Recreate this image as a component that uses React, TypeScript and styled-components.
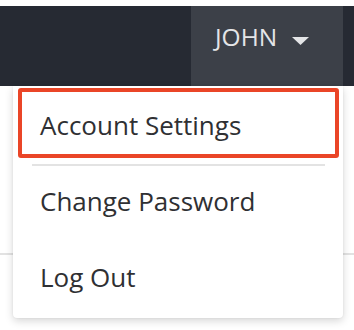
import React from "react";
import styled, { createGlobalStyle } from "styled-components";

const Global = createGlobalStyle`
  html, body { margin: 0; padding: 0; background: #ffffff; }
  body { font-family: "Open Sans", "Noto Sans", sans-serif; }
  * { box-sizing: border-box; }
`;

const Page = styled.div`
  position: relative;
  width: 354px;
  height: 330px;
  padding-top: 6px;
  overflow: hidden;
`;

const Header = styled.header`
  height: 80px;
  background: #262a33;
  display: flex;
  justify-content: flex-end;
  padding-right: 11px;
`;

const UserButton = styled.div`
  width: 152px;
  height: 80px;
  background: #3c4048;
  display: flex;
  align-items: flex-start;
  gap: 15px;
  padding: 15px 0 0 24px;
  color: #e4e5e7;
  font-size: 24.5px;
  line-height: 32px;
`;

const Caret = styled.svg`
  margin-top: 16px;
  flex: none;
`;

const Content = styled.main`
  padding-top: 167px;
`;

const Rule = styled.div`
  height: 2px;
  background: #e2e2e2;
`;

const Dropdown = styled.nav`
  position: absolute;
  top: 86px;
  left: 13px;
  width: 330px;
  background: #ffffff;
  border-radius: 0 0 4px 4px;
  box-shadow: 0 3px 9px rgba(0, 0, 0, 0.16), 0 0 2px rgba(0, 0, 0, 0.08);
  padding-top: 2px;
  display: flex;
  flex-direction: column;
`;

const Item = styled.div<{ $active?: boolean }>`
  font-size: 26px;
  line-height: 32px;
  color: #2f3033;
  white-space: nowrap;
  ${(p) =>
    p.$active
      ? `
    margin: 0 4px 0 5px;
    border: 4px solid #ea4527;
    border-radius: 3px;
    padding: 17px 18px 13px;
  `
      : `
    padding: 19px 27px 25px;
  `}
`;

const Separator = styled.div`
  height: 2px;
  margin: 6px 18px 0 19px;
  background: #e3e3e3;
`;

export default function App() {
  return (
    <Page>
      <Global />
      <Header>
        <UserButton>
          <span>JOHN</span>
          <Caret width="17" height="8" viewBox="0 0 17 8">
            <path d="M0 0 L17 0 L8.5 8 Z" fill="#e4e5e7" />
          </Caret>
        </UserButton>
      </Header>
      <Content>
        <Rule />
      </Content>
      <Dropdown>
        <Item $active>Account Settings</Item>
        <Separator />
        <Item>Change Password</Item>
        <Item>Log Out</Item>
      </Dropdown>
    </Page>
  );
}
